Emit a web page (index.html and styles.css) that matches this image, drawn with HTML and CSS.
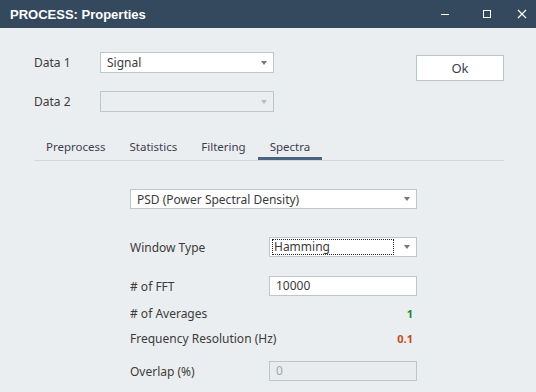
FILE: index.html
```html
<!DOCTYPE html>
<html lang="en">
<head>
  <meta charset="UTF-8">
  <title>PROCESS: Properties</title>
  <link rel="stylesheet" href="styles.css">
</head>
<body>
  <div class="window">
    <div class="titlebar">
      <span class="title">PROCESS: Properties</span>
      <div class="controls">
        <span class="ctl"><svg width="10" height="10" viewBox="0 0 10 10"><path d="M1 5.5h8" stroke="#fff" stroke-width="1"/></svg></span>
        <span class="ctl"><svg width="10" height="10" viewBox="0 0 10 10"><rect x="1.5" y="1.5" width="7" height="7" fill="none" stroke="#fff" stroke-width="1"/></svg></span>
        <span class="ctl last"><svg width="10" height="10" viewBox="0 0 10 10"><path d="M1 1L9 9M9 1L1 9" stroke="#fff" stroke-width="1.2"/></svg></span>
      </div>
    </div>

    <div class="top">
      <div class="data-rows">
        <div class="data-row">
          <span class="data-label">Data 1</span>
          <div class="combo data-combo"><span>Signal</span><i class="arrow"></i></div>
        </div>
        <div class="data-row">
          <span class="data-label">Data 2</span>
          <div class="combo data-combo disabled"><span></span><i class="arrow"></i></div>
        </div>
      </div>
      <button class="ok">Ok</button>
    </div>

    <div class="tabs">
      <span class="tab">Preprocess</span>
      <span class="tab">Statistics</span>
      <span class="tab">Filtering</span>
      <span class="tab active">Spectra</span>
    </div>

    <div class="panel">
      <div class="combo psd"><span>PSD (Power Spectral Density)</span><i class="arrow"></i></div>

      <div class="row window-row">
        <span class="lbl">Window Type</span>
        <div class="combo field focus"><span class="focus-box">Hamming</span><i class="arrow"></i></div>
      </div>
      <div class="row fft-row">
        <span class="lbl"># of FFT</span>
        <div class="input field">10000</div>
      </div>
      <div class="row avg-row">
        <span class="lbl"># of Averages</span>
        <span class="val green">1</span>
      </div>
      <div class="row res-row">
        <span class="lbl">Frequency Resolution (Hz)</span>
        <span class="val red">0.1</span>
      </div>
      <div class="row overlap-row">
        <span class="lbl">Overlap (%)</span>
        <div class="input field disabled">0</div>
      </div>
    </div>
  </div>
</body>
</html>
```

FILE: styles.css
```css
body {
  margin: 0;
  font-family: 'Noto Sans', 'Liberation Sans', sans-serif;
  font-size: 12px;
  color: #3b3b3b;
  background: #ebeef0;
}

.window {
  width: 536px;
  height: 392px;
  overflow: hidden;
}

.titlebar {
  height: 28px;
  background: #35495e;
  display: flex;
  align-items: center;
  justify-content: space-between;
  padding-left: 10px;
}

.title {
  color: #fff;
  font-family: 'Liberation Sans', sans-serif;
  font-weight: bold;
  font-size: 13px;
}

.controls {
  display: flex;
  height: 28px;
}

.ctl {
  width: 42px;
  display: flex;
  align-items: center;
  justify-content: center;
}

.ctl.last {
  width: 28px;
}

.top {
  display: flex;
  justify-content: space-between;
  padding: 24px 32px 0 34px;
}

.data-rows {
  display: flex;
  flex-direction: column;
  gap: 18px;
}

.data-row {
  display: flex;
  align-items: center;
}

.data-label {
  width: 66px;
}

.combo {
  box-sizing: border-box;
  height: 21px;
  background: #fff;
  border: 1px solid #bcc7c8;
  display: flex;
  align-items: center;
  justify-content: space-between;
  padding: 0 6px 0 6px;
}

.combo.disabled {
  background: #ebeef0;
}

.arrow {
  width: 0;
  height: 0;
  border-left: 3.5px solid transparent;
  border-right: 3.5px solid transparent;
  border-top: 4px solid #777;
}

.disabled .arrow {
  border-top-color: #bbb;
}

.data-combo {
  width: 174px;
}

.ok {
  margin-top: 3px;
  width: 88px;
  height: 26px;
  background: #fff;
  border: 1px solid #b9c7c7;
  font-family: 'Noto Sans', sans-serif;
  font-size: 13px;
  color: #3b4050;
  padding: 0;
}

.tabs {
  margin: 22px 32px 0 34px;
  height: 26px;
  display: flex;
  border-bottom: 1px solid #d2d7da;
}

.tab {
  padding: 2px 12px 0;
  line-height: 22px;
  font-size: 11.5px;
  color: #3d3d50;
}

.tab.active {
  box-shadow: inset 0 -3px 0 #4a6480;
}

.panel {
  padding: 28px 0 0 130px;
  width: 287px;
}

.psd {
  height: 20px;
}

.row {
  display: flex;
  align-items: center;
  justify-content: space-between;
}

.field {
  box-sizing: border-box;
  width: 148px;
  height: 20px;
}

.input {
  background: #fff;
  border: 1px solid #bcc7c8;
  padding: 0 6px;
  line-height: 18px;
}

.input.disabled {
  background: #e9ecee;
  color: #a0a8aa;
}

.focus.combo {
  padding: 0 6px 0 2px;
}

.focus-box {
  flex: 1;
  margin-right: 10px;
  border: 1px dotted #222;
  line-height: 14px;
  padding-left: 1px;
}

.window-row {
  margin-top: 28px;
}

.fft-row {
  margin-top: 19px;
}

.avg-row {
  margin-top: 8px;
  height: 18px;
}

.res-row {
  margin-top: 7px;
  height: 18px;
}

.overlap-row {
  margin-top: 14px;
}

.val {
  font-weight: bold;
  padding-right: 4px;
  font-size: 11px;
}

.green {
  color: #1a8a2e;
}

.red {
  color: #c24a16;
}
```
